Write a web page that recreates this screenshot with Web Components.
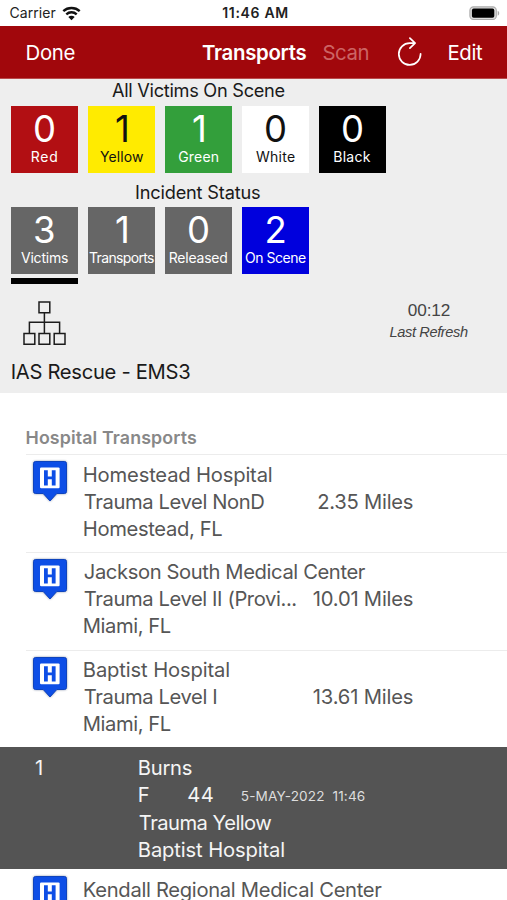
<!DOCTYPE html>
<html lang="en">
<head>
<meta charset="utf-8">
<title>Transports</title>
<style>
body{margin:0;width:507px;height:900px;overflow:hidden;background:#fff;font-family:Inter,"Liberation Sans",sans-serif}
</style>
</head>
<body>
<transport-app></transport-app>
<script>
const define = (name, html, Base = HTMLElement) => {
  const t = document.createElement('template');
  t.innerHTML = html;
  customElements.define(name, class extends Base {
    constructor() {
      super();
      this.attachShadow({mode: 'open'}).append(t.content.cloneNode(true));
    }
  });
};

/* A line of text tracked so that its glyphs span exactly `w` pixels. */
const pen = document.createElement('canvas').getContext('2d');
customElements.define('t-line', class extends HTMLElement {
  connectedCallback() {
    if (this.shadowRoot) return;
    const a = (n, d) => this.getAttribute(n) || d;
    const text = a('text', ''), size = +a('size', 20.2), weight = a('weight', 400), w = +a('w', 50);
    const family = a('face', 'Inter'), style = a('slant', 'normal');
    pen.font = `${style} ${weight} ${size}px "${family}"`;
    const m = pen.measureText(text);
    const ink = m.actualBoundingBoxLeft + m.actualBoundingBoxRight;
    const n = text.length - 1;
    const gap = n ? (w - ink) / n : 0;
    const lead = m.actualBoundingBoxLeft + (n ? 0 : (w - ink) / 2);
    const root = this.attachShadow({mode: 'open'});
    root.innerHTML = `<style>
      :host{display:block;flex:none;width:${w}px;height:${a('h', 27)}px;line-height:${a('h', 27)}px;white-space:pre}
      span{display:block;width:max-content;margin-left:${lead}px;font:${style} ${weight} ${size}px/${a('h', 27)}px "${family}",sans-serif;letter-spacing:${gap}px}
    </style><span></span>`;
    root.querySelector('span').textContent = text;
  }
});

define('status-bar', `<style>
:host{display:grid;grid-template-columns:1fr auto 1fr;align-items:center;height:25.5px;padding:1px 7px 0 9.5px;box-sizing:border-box;background:#fff;color:#222}
.l{display:flex;gap:6px;align-items:center}.r{justify-self:end;display:flex}
svg{display:block}
</style>
<div class="l"><t-line text="Carrier" size="14" w="46" h="24"></t-line>
<svg width="19" height="15" viewBox="0 0 19 15" fill="none" stroke="#111" stroke-width="2.4"><path d="M1.3 5.1C5.9.9 13.1.9 17.7 5.1M4.3 8.3c3-2.7 7.4-2.7 10.4 0"/><path fill="#111" stroke="none" d="M6.3 10.9c1.9-1.7 4.5-1.7 6.4 0L9.5 14.2z"/></svg></div>
<t-line text="11:46 AM" size="14" weight="600" w="65" h="24"></t-line>
<div class="r"><svg width="31" height="15" viewBox="0 0 31 15"><rect x=".9" y=".9" width="26.4" height="12.6" rx="3.6" fill="#ddd" stroke="#aaa" stroke-width="1.1"/><rect x="2.9" y="2.6" width="22.4" height="9.2" rx="1.8" fill="#000"/><path d="M28.7 4.8c2 .9 2 4 0 4.9z" fill="#aaa"/></svg></div>`);

define('nav-bar', `<style>
:host{display:flex;align-items:center;height:53.5px;box-sizing:border-box;padding:1.5px 25px 0 26.5px;background:#a1070c;color:#fff;border-bottom:1px solid #b94b4d}
.s{color:#cc6464;margin-left:17px}.t{margin-left:127.5px}
svg{margin:0 26px 0 28px;flex:none}
</style>
<t-line text="Done" size="20.4" w="48"></t-line>
<t-line class="t" text="Transports" size="20.4" weight="600" w="104.5"></t-line>
<t-line class="s" text="Scan" size="20.4" w="45"></t-line>
<svg width="26" height="32" viewBox="0 0 26 32" fill="none" stroke="#fff" stroke-width="1.7" stroke-linecap="round" stroke-linejoin="round"><path d="M23.6 16.8a10.9 10.9 0 1 1-10.9-10.7h4.5M12.9 1.2l5.2 4.9-5.2 5"/></svg>
<t-line text="Edit" size="20.4" w="34.5"></t-line>`);

customElements.define('count-tile', class extends HTMLElement {
  connectedCallback() {
    if (this.shadowRoot) return;
    const g = n => this.getAttribute(n);
    this.attachShadow({mode: 'open'}).innerHTML = `<style>
:host{display:flex;flex-direction:column;align-items:center;width:67px;height:67px;box-sizing:border-box;padding-top:4px;background:${g('bg')};color:${g('fg') || '#fff'}}
</style>
<t-line text="${g('count')}" size="36.5" weight="370" w="20" h="38"></t-line>
<t-line text="${g('label')}" size="14" w="${g('w')}" h="18"></t-line>`;
  }
});

define('tile-row', `<style>:host{display:flex;gap:10px}</style><slot></slot>`);

define('org-icon', `<style>:host{display:block;width:43px;height:44px}svg{display:block}</style>
<svg width="43" height="44" viewBox="0 0 43 44" fill="none" stroke="#1c1c1c" stroke-width="1.5"><path d="M16 1h10.8v10.8H16zM1 32.5h10.8v10.8H1zM16 32.5h10.8v10.8H16zM31.2 32.5H42v10.8H31.2zM21.4 11.8v20.7M6.4 32.5V21.2h30.2v11.3"/></svg>`);

define('incident-summary', `<style>
:host{display:block;height:314px;box-sizing:border-box;padding:0 11px;background:#eee;color:#1a1a1a}
.h{display:block;margin-left:101px;padding-bottom:5px}
.i{margin:7px 0 3px 125px}
.bar{width:67px;height:6.5px;margin-top:3.5px;background:#000}
.mid{display:flex;justify-content:space-between;padding:17px 28px 0 12px;height:76px;box-sizing:border-box}
.time{display:flex;flex-direction:column;align-items:center;color:#444}
.u{margin-left:.7px}
</style>
<t-line class="h" text="All Victims On Scene" size="18.2" w="172.5" h="22"></t-line>
<tile-row>
<count-tile bg="#b20f13" count="0" label="Red" w="25.5"></count-tile>
<count-tile bg="#ffeb00" fg="#111" count="1" label="Yellow" w="43"></count-tile>
<count-tile bg="#339f3b" count="1" label="Green" w="40.5"></count-tile>
<count-tile bg="#fff" fg="#111" count="0" label="White" w="39"></count-tile>
<count-tile bg="#000" count="0" label="Black" w="36.5"></count-tile>
</tile-row>
<t-line class="i" text="Incident Status" size="18.2" w="124" h="24"></t-line>
<tile-row>
<count-tile bg="#666" count="3" label="Victims" w="47"></count-tile>
<count-tile bg="#666" count="1" label="Transports" w="65"></count-tile>
<count-tile bg="#666" count="0" label="Released" w="57.5"></count-tile>
<count-tile bg="#00d" count="2" label="On Scene" w="61"></count-tile>
</tile-row>
<div class="bar"></div>
<div class="mid"><org-icon></org-icon>
<div class="time"><t-line text="00:12" face="Liberation Sans" size="17.2" w="42" h="18"></t-line>
<t-line text="Last Refresh" face="Liberation Sans" slant="italic" size="14.6" w="78.5" h="26"></t-line></div></div>
<t-line class="u" text="IAS Rescue - EMS3" size="20.2" w="178.5" h="24"></t-line>`);

define('hospital-pin', `<style>:host{display:block;flex:none;width:38px;height:46px}svg{display:block;filter:drop-shadow(0 0 1.3px #8993ac)}</style>
<svg width="38" height="46" viewBox="0 0 38 46"><path fill="#0d4ee6" stroke="#073dba" stroke-width=".9" d="M4.5 2.5h29q2 0 2 2v28q0 2-2 2h-7.7L19 42l-6.8-7.5H4.5q-2 0-2-2v-28q0-2 2-2z"/><rect x="9" y="8.4" width="19.6" height="20.8" rx="1.2" fill="#fff"/><path fill="#0d4ee6" d="M13 11.2h3.8v6.2h4v-6.2h3.8v15.4h-3.8v-6.3h-4v6.3H13z"/></svg>`);

customElements.define('hospital-row', class extends HTMLElement {
  connectedCallback() {
    if (this.shadowRoot) return;
    const p = n => (this.getAttribute(n) || '').split('|');
    const line = n => { const [t, w] = p(n); return t ? `<t-line text="${t}" w="${w}"></t-line>` : ''; };
    this.attachShadow({mode: 'open'}).innerHTML = `<style>
:host{display:flex;height:97.75px;box-sizing:border-box;margin-left:26px;border-top:1.5px solid #ececec;color:#565656}
hospital-pin{margin:4px 0 0 5px}
.b{width:329px;margin-left:14.8px;padding-top:5.5px}
.m{display:flex;justify-content:space-between}
</style><hospital-pin></hospital-pin>
<div class="b">${line('name')}<div class="m">${line('level')}${line('miles')}</div>${line('city')}</div>`;
  }
});

define('patient-row', `<style>
:host{display:flex;height:122px;box-sizing:border-box;padding:6.5px 0 0 35px;background:#545454;color:#f5f5f5}
.b{margin-left:96.8px}.f{display:flex;align-items:center;height:28px}
.age{margin-left:39.5px;padding-bottom:1px}.d{margin-left:29px;padding-top:4px;color:#ddd}
</style>
<t-line text="1" w="7"></t-line>
<div class="b"><t-line text="Burns" w="53"></t-line>
<div class="f"><t-line text="F" w="10"></t-line><t-line class="age" text="44" w="24.5"></t-line><t-line class="d" text="5-MAY-2022  11:46" size="13.6" w="123"></t-line></div>
<t-line text="Trauma Yellow" w="132.5"></t-line><t-line text="Baptist Hospital" w="145.5"></t-line></div>`);

define('transport-list', `<style>
:host{display:block;background:#fff;padding-top:31px}
.t{margin-left:26.5px;color:#888;padding-bottom:3px}
</style>
<t-line class="t" text="Hospital Transports" size="17.8" weight="600" w="170.5" h="27"></t-line><slot></slot>`);

define('transport-app', `<style>:host{display:block;width:507px;height:900px;overflow:hidden}
.last{border-top-color:transparent}</style>
<status-bar></status-bar><nav-bar></nav-bar><incident-summary></incident-summary>
<transport-list>
<hospital-row name="Homestead Hospital|188" level="Trauma Level NonD|180.5" miles="2.35 Miles|94.5" city="Homestead, FL|138.5"></hospital-row>
<hospital-row name="Jackson South Medical Center|282" level="Trauma Level II (Provi...|212.5" miles="10.01 Miles|100" city="Miami, FL|87"></hospital-row>
<hospital-row name="Baptist Hospital|145.5" level="Trauma Level I|132.5" miles="13.61 Miles|100" city="Miami, FL|87"></hospital-row>
<patient-row></patient-row>
<hospital-row class="last" name="Kendall Regional Medical Center|298.5"></hospital-row>
</transport-list>`);
</script>
</body>
</html>
